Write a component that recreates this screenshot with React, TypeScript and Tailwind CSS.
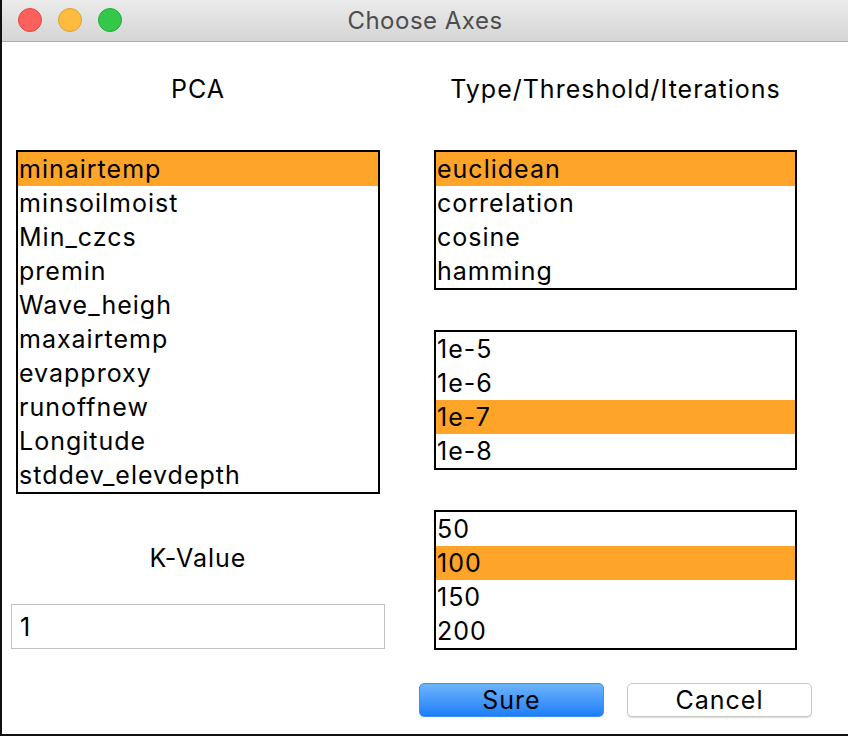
const PCA_ITEMS = [
  "minairtemp",
  "minsoilmoist",
  "Min_czcs",
  "premin",
  "Wave_heigh",
  "maxairtemp",
  "evapproxy",
  "runoffnew",
  "Longitude",
  "stddev_elevdepth",
];

const DISTANCES = ["euclidean", "correlation", "cosine", "hamming"];
const THRESHOLDS = ["1e-5", "1e-6", "1e-7", "1e-8"];
const ITERATIONS = ["50", "100", "150", "200"];

function ListBox({ items, selected }: { items: string[]; selected: number }) {
  return (
    <div className="border-2 border-black bg-white">
      {items.map((item, i) => (
        <div
          key={item}
          className={`h-[34px] pl-[1px] text-[25px] leading-[34px] tracking-[1px] text-black ${
            i === selected ? "bg-[#fea429]" : ""
          }`}
        >
          {item}
        </div>
      ))}
    </div>
  );
}

export default function App() {
  return (
    <div
      className="w-[848px] h-[736px] bg-white border-l-2 border-b-2 border-[#111] flex flex-col overflow-hidden"
      style={{ fontFamily: "Inter, 'Liberation Sans', sans-serif" }}
    >
      {/* title bar */}
      <div className="h-[42px] shrink-0 relative flex items-center justify-center bg-gradient-to-b from-[#ebebeb] to-[#d5d5d5] border-b border-[#b1b1b1]">
        <div className="absolute left-[16px] top-[8px] flex gap-[16px]">
          <span className="w-[24px] h-[24px] rounded-full bg-[#fc605c] border border-[#de4a45]" />
          <span className="w-[24px] h-[24px] rounded-full bg-[#fdbc40] border border-[#de9f34]" />
          <span className="w-[24px] h-[24px] rounded-full bg-[#34c84a] border border-[#27aa35]" />
        </div>
        <span className="text-[24px] tracking-[0.5px] text-[#4d4d4d]">Choose Axes</span>
      </div>

      <div className="flex flex-1">
        {/* left column */}
        <div className="ml-[14px] w-[364px] flex flex-col">
          <div className="mt-[33px] h-[28px] text-center text-[25px] leading-[28px] tracking-[1px] text-black">PCA</div>
          <div className="mt-[47px]">
            <ListBox items={PCA_ITEMS} selected={0} />
          </div>
          <div className="mt-[50px] h-[28px] text-center text-[25px] leading-[28px] tracking-[1px] text-black">K-Value</div>
          <input
            readOnly
            value="1"
            className="mt-[32px] -mx-[5px] h-[45px] border border-[#c2c2c2] px-[8px] text-[25px] text-black outline-none"
          />
        </div>

        {/* right column */}
        <div className="ml-[54px] w-[363px] flex flex-col">
          <div className="mt-[33px] h-[28px] text-center text-[25px] leading-[28px] tracking-[1px] text-black">
            Type/Threshold/Iterations
          </div>
          <div className="mt-[47px]">
            <ListBox items={DISTANCES} selected={0} />
          </div>
          <div className="mt-[40px]">
            <ListBox items={THRESHOLDS} selected={2} />
          </div>
          <div className="mt-[40px]">
            <ListBox items={ITERATIONS} selected={1} />
          </div>
          <div className="mt-[33px] -mx-[15px] flex justify-between">
            <button
              type="button"
              className="w-[185px] h-[34px] rounded-[5px] bg-gradient-to-b from-[#6cb3fb] to-[#1a7ef8] border border-[#3d8ef7] text-[25px] leading-[32px] tracking-[1px] text-black"
            >
              Sure
            </button>
            <button
              type="button"
              className="w-[185px] h-[34px] rounded-[5px] bg-white border border-[#c8c8c8] shadow-[0_1px_1px_rgba(0,0,0,0.15)] text-[25px] leading-[32px] tracking-[1px] text-black"
            >
              Cancel
            </button>
          </div>
        </div>
      </div>
    </div>
  );
}
